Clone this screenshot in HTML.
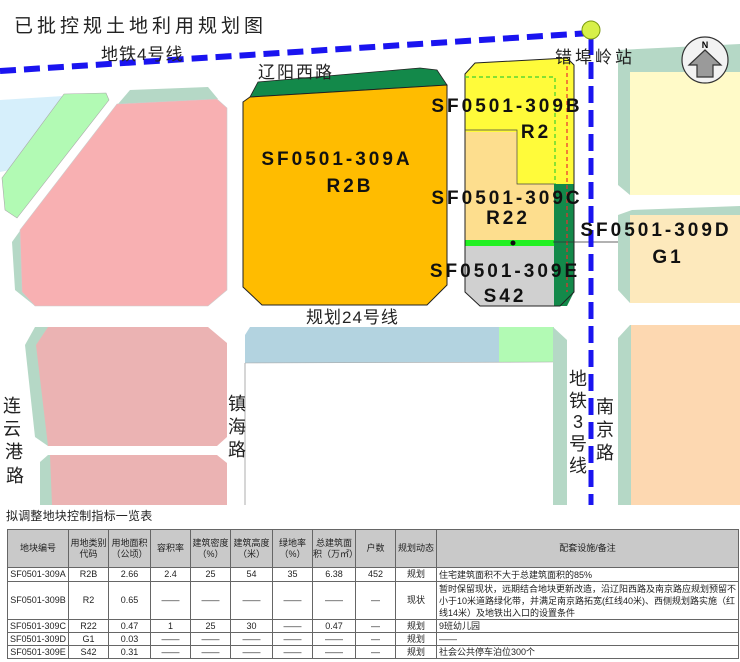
<!DOCTYPE html>
<html><head><meta charset="utf-8"><style>
body{margin:0;width:740px;height:662px;overflow:hidden;background:#fff;font-family:"Liberation Sans","Noto Sans CJK SC",sans-serif;position:relative}
svg{position:absolute;left:0;top:0}
.t{position:absolute;left:7px;top:529px;border-collapse:collapse;font-size:9px;color:#222;table-layout:fixed}
.t td{border:1px solid #666;text-align:center;padding:0;line-height:11px;overflow:hidden}
.t tr.h td{background:#c9c9c9;height:37px}
.t td.n{text-align:left;padding-left:2px;line-height:12px}
.ttl{position:absolute;left:6px;top:507px;font-size:12px;color:#222;letter-spacing:0.2px}
</style></head><body>
<svg width="740" height="520" viewBox="0 0 740 520" font-family="Liberation Sans,Noto Sans CJK SC,sans-serif">
<polygon points="0,100 63,96 20,168 0,172" fill="#d6effb"/>
<polygon points="64,94 106,93 109,100 17,218 5,210 2,178" fill="#b2fab4" stroke="#aaa" stroke-width="0.6"/>
<polygon points="118,104 130,90 208,87 218,99" fill="#b5d8c6"/>
<polygon points="22,228 12,242 15,290 35,306 60,306 30,230" fill="#b5d8c6"/>
<polygon points="117,104 217,99 227,108 227,290 208,306 35,306 22,292 20,230" fill="#f8b0b2" stroke="#ccc" stroke-width="0.6"/>
<polygon points="35,327 25,345 35,437 48,446 60,446 48,327" fill="#b5d8c6"/>
<polygon points="48,327 208,327 227,343 227,437 217,446 48,446 36,345" fill="#ebb3b3"/>
<polygon points="48,455 40,462 40,505 60,505 52,455" fill="#b5d8c6"/>
<polygon points="50,455 217,455 227,463 227,505 52,505" fill="#ebb3b3"/>
<polygon points="250,97 258,82 420,68 437,70 447,85" fill="#13894a" stroke="#222" stroke-width="0.8"/>
<polygon points="243,102 250,97 447,85 447,285 427,305 262,305 243,287" fill="#ffbc00" stroke="#222" stroke-width="1"/>
<polygon points="465,74 475,63 567,58 574,65 574,184 465,184" fill="#fffb3a"/>
<polygon points="465,132 517,132 517,184 554,184 554,240 465,240" fill="#fdde8e"/>
<polygon points="465,246 554,246 554,306 480,306 465,292" fill="#d0d0d0"/>
<polygon points="554,184 574,184 574,292 567,306 554,306" fill="#13894a"/>
<rect x="465" y="240" width="89" height="6" fill="#22f022"/>
<circle cx="513" cy="243" r="2.5" fill="#111"/>
<polygon points="465,74 475,63 567,58 574,65 574,292 560,306 480,306 465,292" fill="none" stroke="#222" stroke-width="1"/>
<polyline points="465,130 517,130 517,184 554,184" fill="none" stroke="#444" stroke-width="0.7"/>
<polyline points="465,77 555,77 555,184" fill="none" stroke="#3cd12e" stroke-width="1.2" stroke-dasharray="4,3"/>
<line x1="567" y1="66" x2="567" y2="292" stroke="#e83030" stroke-width="1.2" stroke-dasharray="4,3"/>
<line x1="553" y1="242" x2="718" y2="242" stroke="#333" stroke-width="0.8"/>
<polygon points="618,50 740,44 740,195 630,195 618,185" fill="#b5d8c6"/>
<rect x="630" y="72" width="110" height="123" fill="#fffac8"/>
<polygon points="618,215 632,210 740,206 740,303 630,303 618,290" fill="#b5d8c6"/>
<rect x="630" y="215" width="110" height="88" fill="#fde9bc"/>
<polygon points="630,325 740,325 740,505 618,505 618,338" fill="#b5d8c6"/>
<rect x="631" y="325" width="109" height="180" fill="#fdd8b1"/>
<polygon points="250,327 554,327 554,362 245,363 245,335" fill="#b3d3e0"/>
<rect x="499" y="327" width="55" height="35" fill="#b2fab4"/>
<polygon points="553,327 567,340 567,505 553,505" fill="#b5d8c6"/>
<line x1="245" y1="363" x2="245" y2="505" stroke="#999" stroke-width="0.8"/>
<line x1="245" y1="363" x2="553" y2="362" stroke="#aaa" stroke-width="0.6"/>
<line x1="0" y1="71" x2="590" y2="33" stroke="#1a14f0" stroke-width="6" stroke-dasharray="16,8"/>
<line x1="591" y1="38" x2="591" y2="505" stroke="#1a14f0" stroke-width="5" stroke-dasharray="17,7"/>
<circle cx="591" cy="30" r="9" fill="#d7f04a" stroke="#7a9a10" stroke-width="1"/>
<circle cx="705" cy="60" r="23" fill="#f2f2f2" stroke="#333" stroke-width="1.2"/>
<polygon points="705,50 721,65 713,65 713,77 697,77 697,65 689,65" fill="#9a9a9a" stroke="#333" stroke-width="1.2"/>
<text x="705" y="48" font-size="9" font-weight="bold" text-anchor="middle">N</text>
<g fill="#222" font-size="19">
<text x="14" y="32" letter-spacing="4">已批控规土地利用规划图</text>
<text x="101" y="60" font-size="17" letter-spacing="1">地铁4号线</text>
<text x="258" y="78" font-size="17" letter-spacing="2">辽阳西路</text>
<text x="555" y="63" font-size="17" letter-spacing="3">错埠岭站</text>
<text x="306" y="323" font-size="17" letter-spacing="1">规划24号线</text>
</g>
<g fill="#222" font-size="18" text-anchor="middle">
<text x="12" y="412">连</text><text x="12" y="435">云</text><text x="14" y="458">港</text><text x="15" y="482">路</text>
<text x="237" y="410">镇</text><text x="237" y="433">海</text><text x="237" y="456">路</text>
<text x="578" y="385">地</text><text x="578" y="407">铁</text><text x="578" y="428">3</text><text x="578" y="450">号</text><text x="578" y="472">线</text>
<text x="605" y="413">南</text><text x="605" y="436">京</text><text x="605" y="459">路</text>
</g>
<g fill="#111" font-size="19" font-weight="bold" text-anchor="middle" letter-spacing="3">
<text x="337" y="165">SF0501-309A</text><text x="350" y="192">R2B</text>
<text x="507" y="112">SF0501-309B</text><text x="536" y="138">R2</text>
<text x="507" y="204">SF0501-309C</text><text x="508" y="224">R22</text>
<text x="656" y="236">SF0501-309D</text><text x="668" y="263">G1</text>
<text x="505" y="277">SF0501-309E</text><text x="505" y="302">S42</text>
</g>
</svg>
<div class="ttl">拟调整地块控制指标一览表</div>
<table class="t">
<colgroup><col style="width:61px"><col style="width:40px"><col style="width:42px"><col style="width:40px"><col style="width:40px"><col style="width:42px"><col style="width:40px"><col style="width:43px"><col style="width:40px"><col style="width:41px"><col style="width:302px"></colgroup>
<tr class="h"><td>地块编号</td><td>用地类别代码</td><td>用地面积（公顷）</td><td>容积率</td><td>建筑密度（%）</td><td>建筑高度（米）</td><td>绿地率（%）</td><td>总建筑面积（万㎡）</td><td>户数</td><td>规划动态</td><td>配套设施/备注</td></tr>
<tr style="height:14px"><td>SF0501-309A</td><td>R2B</td><td>2.66</td><td>2.4</td><td>25</td><td>54</td><td>35</td><td>6.38</td><td>452</td><td>规划</td><td class="n">住宅建筑面积不大于总建筑面积的85%</td></tr>
<tr style="height:38px"><td>SF0501-309B</td><td>R2</td><td>0.65</td><td>——</td><td>——</td><td>——</td><td>——</td><td>——</td><td>—</td><td>现状</td><td class="n">暂时保留现状，远期结合地块更新改造，沿辽阳西路及南京路应规划预留不小于10米道路绿化带，并满足南京路拓宽(红线40米)、西侧规划路实施（红线14米）及地铁出入口的设置条件</td></tr>
<tr style="height:12px"><td>SF0501-309C</td><td>R22</td><td>0.47</td><td>1</td><td>25</td><td>30</td><td>——</td><td>0.47</td><td>—</td><td>规划</td><td class="n">9班幼儿园</td></tr>
<tr style="height:13px"><td>SF0501-309D</td><td>G1</td><td>0.03</td><td>——</td><td>——</td><td>——</td><td>——</td><td>——</td><td>—</td><td>规划</td><td class="n">——</td></tr>
<tr style="height:13px"><td>SF0501-309E</td><td>S42</td><td>0.31</td><td>——</td><td>——</td><td>——</td><td>——</td><td>——</td><td>—</td><td>规划</td><td class="n">社会公共停车泊位300个</td></tr>
</table>
</body></html>
